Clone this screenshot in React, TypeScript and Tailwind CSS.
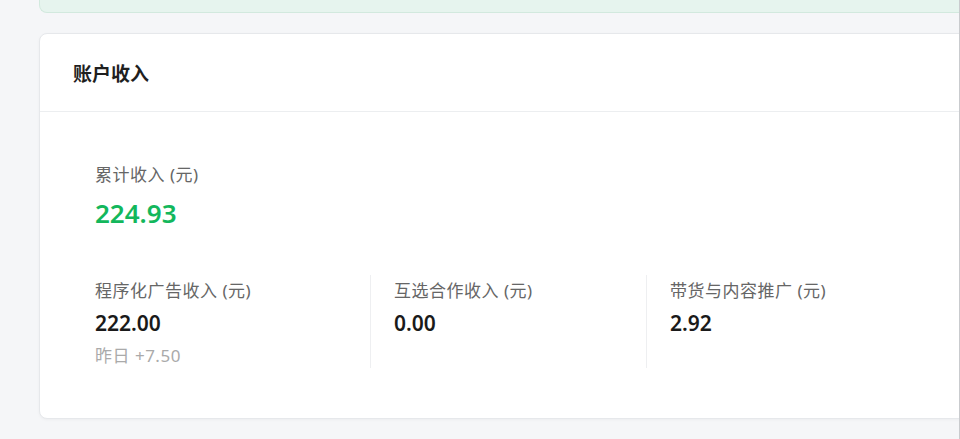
import React from 'react';

type Stat = {
  label: string;
  value: string;
  sub?: string;
};

const STATS: Stat[] = [
  { label: '程序化广告收入 (元)', value: '222.00', sub: '昨日 +7.50' },
  { label: '互选合作收入 (元)', value: '0.00' },
  { label: '带货与内容推广 (元)', value: '2.92' },
];

const FONT = '"Noto Sans", "Noto Sans CJK SC", sans-serif';

export default function App() {
  return (
    <div
      className="w-[960px] h-[439px] overflow-hidden flex bg-[#f5f6f8]"
      style={{ fontFamily: FONT }}
    >
      <div className="flex-1 min-w-0 pl-[39px]">
        {/* notice banner, scrolled mostly out of view */}
        <div className="h-[13px] w-[960px] bg-[#e6f4ee] border-b border-l border-[#d2e9de] rounded-bl-lg" />

        <div className="mt-[20px] w-[1000px] bg-white border border-[#e6e8eb] rounded-lg shadow-[0_1px_3px_rgba(0,0,0,0.04)]">
          <div className="h-[78px] flex items-center pl-[33px] pt-[3px] border-b border-[#eceef0]">
            <h3 className="text-[19px] font-bold text-[#1f1f1f] leading-none">账户收入</h3>
          </div>

          <div className="pt-[51px] pb-[50px] pl-[55px]">
            <div className="text-[17px] leading-[24px] tracking-[0.5px] text-[#666]">累计收入 (元)</div>
            <div className="mt-[8px] text-[26px] leading-[36px] font-semibold text-[#13b75c]">
              224.93
            </div>

            <div className="mt-[44px] grid grid-cols-[275px_276px_276px]">
              {STATS.map((s, i) => (
                <div
                  key={s.label}
                  className={
                    i === 0 ? 'pt-1' : 'pt-1 pl-[23px] border-l border-[#eeeff1]'
                  }
                >
                  <div className="text-[17px] leading-[24px] tracking-[0.5px] text-[#666]">
                    {s.label}
                  </div>
                  <div className="mt-[6px] text-[21px] leading-[28px] font-semibold text-[#1a1a1a]">
                    {s.value}
                  </div>
                  {s.sub ? (
                    <div className="mt-[7px] text-[17px] leading-[24px] tracking-[0.5px] text-[#aaaaaa]">
                      {s.sub}
                    </div>
                  ) : (
                    <div className="mt-[7px] h-[24px]" />
                  )}
                </div>
              ))}
            </div>
          </div>
        </div>
      </div>
      <div className="w-px shrink-0 bg-[#c9cbce]" />
    </div>
  );
}
